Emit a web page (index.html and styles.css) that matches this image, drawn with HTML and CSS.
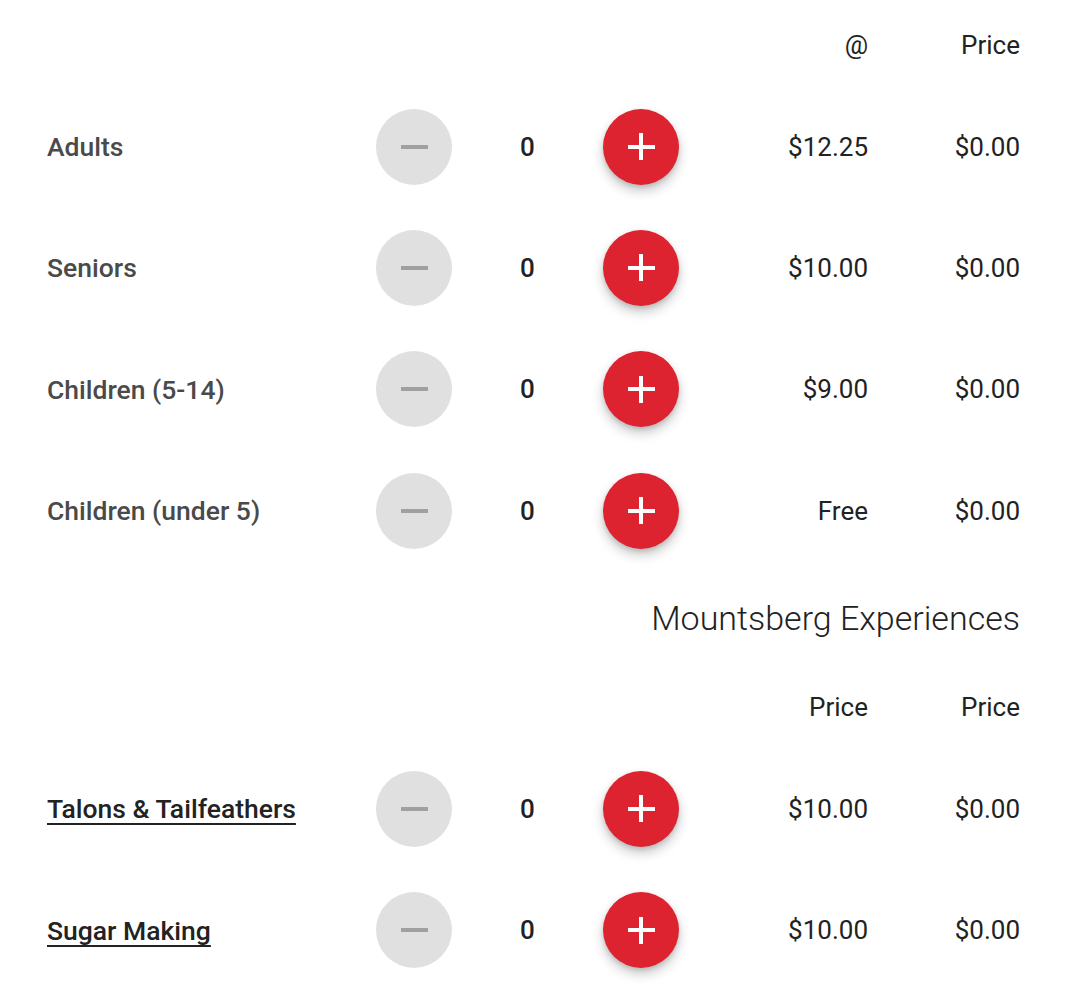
FILE: index.html
```html
<!DOCTYPE html>
<html lang="en">
<head>
<meta charset="utf-8">
<title>Tickets</title>
<link rel="stylesheet" href="styles.css">
</head>
<body>
<div class="page">
  <div class="row head">
    <span class="c-label"></span><span></span><span></span><span></span>
    <span class="c-at">@</span>
    <span class="c-price">Price</span>
  </div>

  <div class="row">
    <span class="c-label">Adults</span>
    <button class="btn minus" aria-label="Remove"><span class="bar"></span></button>
    <span class="count">0</span>
    <button class="btn plus" aria-label="Add"><span class="bar h"></span><span class="bar v"></span></button>
    <span class="c-at">$12.25</span>
    <span class="c-price">$0.00</span>
  </div>
  <div class="row">
    <span class="c-label">Seniors</span>
    <button class="btn minus" aria-label="Remove"><span class="bar"></span></button>
    <span class="count">0</span>
    <button class="btn plus" aria-label="Add"><span class="bar h"></span><span class="bar v"></span></button>
    <span class="c-at">$10.00</span>
    <span class="c-price">$0.00</span>
  </div>
  <div class="row">
    <span class="c-label">Children (5-14)</span>
    <button class="btn minus" aria-label="Remove"><span class="bar"></span></button>
    <span class="count">0</span>
    <button class="btn plus" aria-label="Add"><span class="bar h"></span><span class="bar v"></span></button>
    <span class="c-at">$9.00</span>
    <span class="c-price">$0.00</span>
  </div>
  <div class="row">
    <span class="c-label">Children (under 5)</span>
    <button class="btn minus" aria-label="Remove"><span class="bar"></span></button>
    <span class="count">0</span>
    <button class="btn plus" aria-label="Add"><span class="bar h"></span><span class="bar v"></span></button>
    <span class="c-at">Free</span>
    <span class="c-price">$0.00</span>
  </div>

  <h2 class="section">Mountsberg Experiences</h2>

  <div class="row head head2">
    <span class="c-label"></span><span></span><span></span><span></span>
    <span class="c-at">Price</span>
    <span class="c-price">Price</span>
  </div>

  <div class="row">
    <a class="c-label link" href="#">Talons &amp; Tailfeathers</a>
    <button class="btn minus" aria-label="Remove"><span class="bar"></span></button>
    <span class="count">0</span>
    <button class="btn plus" aria-label="Add"><span class="bar h"></span><span class="bar v"></span></button>
    <span class="c-at">$10.00</span>
    <span class="c-price">$0.00</span>
  </div>
  <div class="row">
    <a class="c-label link" href="#">Sugar Making</a>
    <button class="btn minus" aria-label="Remove"><span class="bar"></span></button>
    <span class="count">0</span>
    <button class="btn plus" aria-label="Add"><span class="bar h"></span><span class="bar v"></span></button>
    <span class="c-at">$10.00</span>
    <span class="c-price">$0.00</span>
  </div>
</div>
</body>
</html>
```

FILE: styles.css
```css
* { box-sizing: border-box; }
html, body { margin: 0; padding: 0; background: #ffffff; }
body {
  font-family: Roboto, "Noto Sans", "Liberation Sans", sans-serif;
  color: #222222;
}
.page {
  width: 1080px;
  padding: 0 60px 0 47px;
}
.row {
  display: grid;
  grid-template-columns: 329px 76px 151px 76px 189px 152px;
  align-items: center;
  height: 121.3px;
  font-size: 26px;
}
.head {
  height: auto;
  line-height: 30px;
  padding: 30px 0 26px;
}
.head2 {
  padding: 0 0 26px;
}
.c-label {
  font-size: 26.5px;
  font-weight: 500;
  color: #4a4a4a;
}
.link {
  color: #222222;
  text-decoration: underline;
  text-decoration-thickness: 2px;
  text-underline-offset: 5px;
  text-decoration-skip-ink: none;
}
.c-at, .c-price {
  text-align: right;
  font-weight: 400;
  color: #222222;
}
.count {
  text-align: center;
  font-weight: 500;
  color: #222222;
}
.btn {
  width: 76px;
  height: 76px;
  border-radius: 50%;
  border: 0;
  padding: 0;
  position: relative;
  cursor: pointer;
}
.minus { background: #e0e0e0; }
.plus {
  background: #dd2230;
  box-shadow: 0 6px 12px rgba(0, 0, 0, 0.22), 0 2px 4px rgba(0, 0, 0, 0.12);
}
.bar {
  position: absolute;
  left: 50%;
  top: 50%;
  display: block;
}
.minus .bar {
  width: 27px;
  height: 4px;
  margin: -2px 0 0 -13.5px;
  background: #a0a0a0;
}
.plus .bar { background: #ffffff; }
.plus .h { width: 27px; height: 4px; margin: -2px 0 0 -13.5px; }
.plus .v { width: 4px; height: 27px; margin: -13.5px 0 0 -2px; }
.section {
  margin: 25px 0 52px;
  font-size: 34px;
  line-height: 44px;
  font-weight: 300;
  text-align: right;
  color: #222222;
}
```
